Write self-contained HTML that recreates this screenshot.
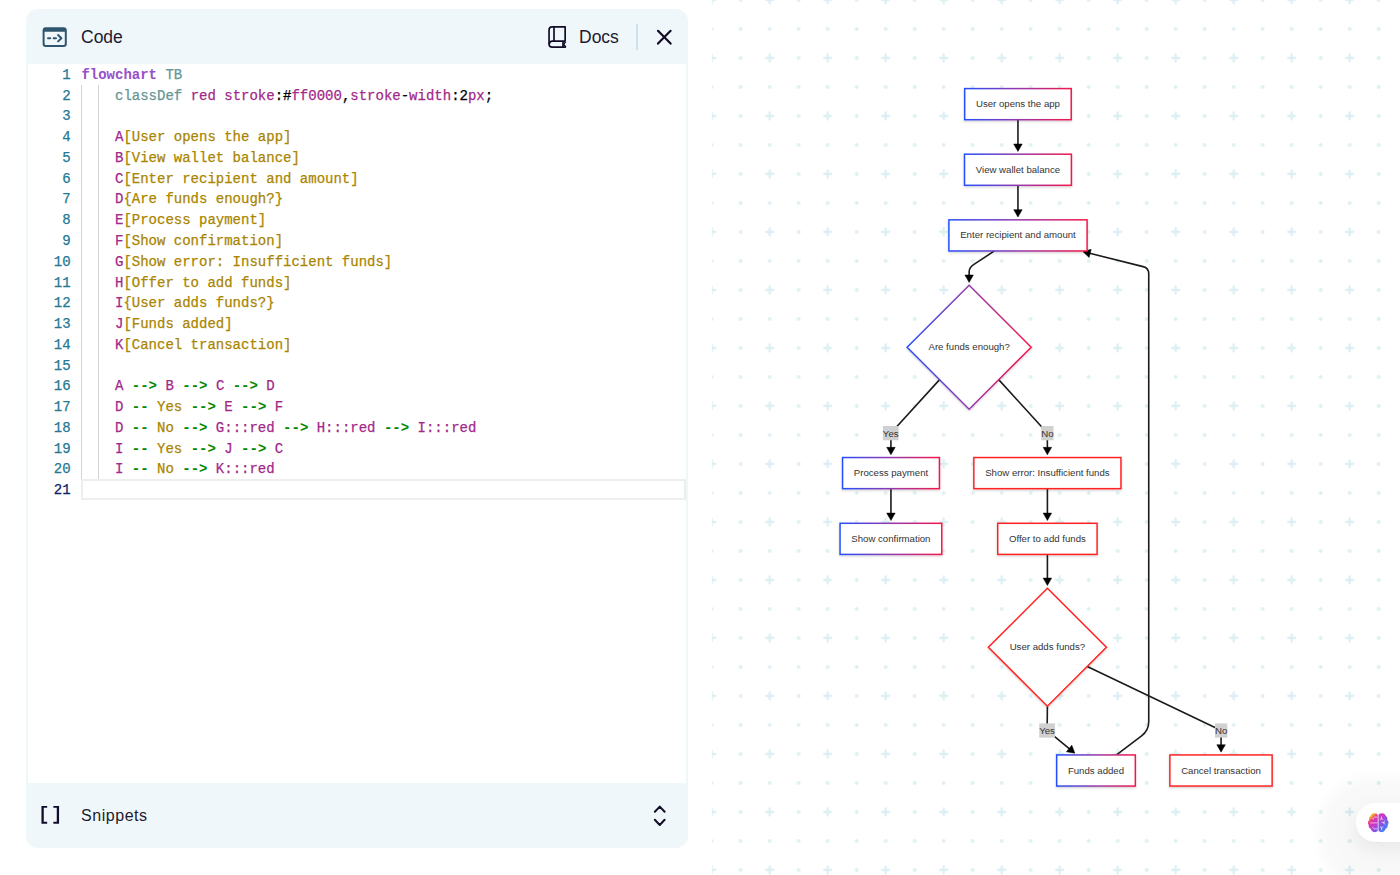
<!DOCTYPE html>
<html>
<head>
<meta charset="utf-8">
<title>Mermaid Playground</title>
<style>
html,body{margin:0;padding:0;}
body{width:1400px;height:875px;overflow:hidden;background:#fff;position:relative;font-family:"Liberation Sans",sans-serif;color:#1e1a2e;}
#canvas{position:absolute;left:712px;top:0;width:688px;height:875px;overflow:hidden;}
#canvas svg{position:absolute;left:0;top:0;}
#panel{position:absolute;left:26px;top:8.6px;width:662px;height:839.4px;background:#eff7fa;border-radius:12px;overflow:hidden;}
#hdr{position:absolute;left:0;top:0;width:662px;height:54px;}
#hdr .ttl{position:absolute;left:55px;top:17.6px;font-size:17.5px;line-height:22px;color:#1e1a2e;}
#hdr .docs{position:absolute;left:553px;top:17.6px;font-size:17.5px;line-height:22px;color:#1e1a2e;}
#hdr .sep{position:absolute;left:610.3px;top:15.4px;width:1.8px;height:26.2px;background:#cbe0f0;}
#ed{position:absolute;left:2px;top:55.2px;width:658px;height:719.5px;background:#fff;overflow:hidden;font-family:"Liberation Mono",monospace;font-size:14px;-webkit-text-stroke:0.25px currentColor;}
.ln{position:absolute;left:0;width:658px;height:20.77px;line-height:20.77px;white-space:pre;}
.ln .n{position:absolute;left:0;top:2px;width:42.6px;text-align:right;color:#237893;}
.ln .c{position:absolute;left:53.4px;top:2px;color:#000;}
.ln.act .n{color:#0b216f;}
.g{position:absolute;width:1px;background:#d3d3d3;}
.tk{color:#9650c8;font-weight:bold;-webkit-text-stroke:0;}
.kw{color:#649696;}
.v{color:#a22889;}
.s{color:#aa8500;}
.t{color:#008800;font-weight:bold;-webkit-text-stroke:0;}
#cur{position:absolute;left:53.4px;top:415.4px;width:600.6px;height:16.8px;border:2px solid #eeeeee;}
#ftr{position:absolute;left:0;top:774.7px;width:662px;height:64.7px;}
#ftr .ttl{position:absolute;left:55px;top:796px;}
#snip{position:absolute;left:55px;top:21.7px;font-size:16px;line-height:22px;letter-spacing:0.55px;color:#1e1a2e;}
#pill{position:absolute;left:1356px;top:802.5px;width:80px;height:39.5px;border-radius:20px;background:#fff;box-shadow:0 10.5px 14px 37px rgba(0,0,0,0.028),0 8px 16px 2px rgba(0,0,0,0.055);}
</style>
</head>
<body>
<div id="canvas">
<svg width="688" height="875" viewBox="712 0 688 875">
<defs>
<pattern id="grid" x="682.65" y="-29.05" width="58" height="58" patternUnits="userSpaceOnUse">
<g stroke="#dceff3" stroke-width="2.3" stroke-linecap="round" fill="none">
<path d="M25.5 29H32.5M29 25.5V32.5"/>
</g>
<g fill="#dff0f4">
<circle cx="0" cy="0" r="1.95"/><circle cx="58" cy="0" r="1.95"/><circle cx="0" cy="58" r="1.95"/><circle cx="58" cy="58" r="1.95"/>
<circle cx="29" cy="0" r="1.95"/><circle cx="29" cy="58" r="1.95"/>
<circle cx="0" cy="29" r="1.95"/><circle cx="58" cy="29" r="1.95"/>
</g>
</pattern>
</defs>
<rect x="712" y="0" width="688" height="875" fill="url(#grid)"/>
<defs>
<linearGradient id="ng" x1="0" y1="0" x2="1" y2="0"><stop offset="0" stop-color="#2650fb"/><stop offset="0.5" stop-color="#9438ad"/><stop offset="1" stop-color="#f7174a"/></linearGradient>
<filter id="ds" x="-10%" y="-20%" width="120%" height="150%"><feDropShadow dx="0" dy="1.2" stdDeviation="1.3" flood-color="#000" flood-opacity="0.19"/></filter>
</defs>
<path d="M1017.95 119.7 L1017.95 144.5" fill="none" stroke="#1b1b1b" stroke-width="1.6"/>
<path d="M1017.95 151.4L1013.7 144L1022.2 144Z" fill="#000" stroke="#000" stroke-width="0.5" stroke-linejoin="round"/>
<path d="M1017.95 185.3 L1017.95 210.15" fill="none" stroke="#1b1b1b" stroke-width="1.6"/>
<path d="M1017.95 217.05L1013.7 209.65L1022.2 209.65Z" fill="#000" stroke="#000" stroke-width="0.5" stroke-linejoin="round"/>
<path d="M994.41 250.95 L974.33 264.19 Q969.15 267.6 969.15 271.55 L969.15 275.5" fill="none" stroke="#1b1b1b" stroke-width="1.6"/>
<path d="M969.15 282.4L964.9 275L973.4 275Z" fill="#000" stroke="#000" stroke-width="0.5" stroke-linejoin="round"/>
<path d="M939.6 379.65 L895.07 428.57 Q890.9 433.15 890.91 439.35 L890.93 447.85" fill="none" stroke="#1b1b1b" stroke-width="1.6"/>
<path d="M890.94 454.75L886.68 447.36L895.18 447.34Z" fill="#000" stroke="#000" stroke-width="0.5" stroke-linejoin="round"/>
<path d="M998.69 379.66 L1043.18 428.56 Q1047.35 433.15 1047.36 439.35 L1047.38 447.85" fill="none" stroke="#1b1b1b" stroke-width="1.6"/>
<path d="M1047.39 454.75L1043.13 447.36L1051.63 447.34Z" fill="#000" stroke="#000" stroke-width="0.5" stroke-linejoin="round"/>
<path d="M890.95 488.65 L890.95 513.6" fill="none" stroke="#1b1b1b" stroke-width="1.6"/>
<path d="M890.95 520.5L886.7 513.1L895.2 513.1Z" fill="#000" stroke="#000" stroke-width="0.5" stroke-linejoin="round"/>
<path d="M1047.4 488.65 L1047.4 513.6" fill="none" stroke="#1b1b1b" stroke-width="1.6"/>
<path d="M1047.4 520.5L1043.15 513.1L1051.65 513.1Z" fill="#000" stroke="#000" stroke-width="0.5" stroke-linejoin="round"/>
<path d="M1047.4 554.4 L1047.4 578.6" fill="none" stroke="#1b1b1b" stroke-width="1.6"/>
<path d="M1047.4 585.5L1043.15 578.1L1051.65 578.1Z" fill="#000" stroke="#000" stroke-width="0.5" stroke-linejoin="round"/>
<path d="M1047.4 706.3 L1047.21 724.3 Q1047.15 730.5 1051.95 734.43 L1069.5 748.8" fill="none" stroke="#1b1b1b" stroke-width="1.6"/>
<path d="M1074.84 753.18L1066.43 751.78L1071.81 745.2Z" fill="#000" stroke="#000" stroke-width="0.5" stroke-linejoin="round"/>
<path d="M1087.29 666.41 L1215.51 727.82 Q1221.1 730.5 1221.09 736.7 L1221.07 745.25" fill="none" stroke="#1b1b1b" stroke-width="1.6"/>
<path d="M1221.06 752.15L1216.82 744.74L1225.32 744.76Z" fill="#000" stroke="#000" stroke-width="0.5" stroke-linejoin="round"/>
<path d="M1116.5 754.95 L1141.57 735.94 Q1148.74 730.5 1148.74 721.5 L1148.74 273.85 Q1148.74 268.05 1143.11 266.64 L1089.68 253.3" fill="none" stroke="#1b1b1b" stroke-width="1.6"/>
<path d="M1082.98 251.63L1091.19 249.3L1089.13 257.54Z" fill="#000" stroke="#000" stroke-width="0.5" stroke-linejoin="round"/>
<rect x="964.69" y="88.6" width="106.53" height="31.1" fill="#fff" stroke="url(#ng)" stroke-width="1.5" filter="url(#ds)"/>
<text x="1017.95" y="107.15" text-anchor="middle" font-family="Liberation Sans, sans-serif" font-size="9.65" fill="#333">User opens the app</text>
<rect x="964.51" y="154.2" width="106.88" height="31.1" fill="#fff" stroke="url(#ng)" stroke-width="1.5" filter="url(#ds)"/>
<text x="1017.95" y="172.75" text-anchor="middle" font-family="Liberation Sans, sans-serif" font-size="9.65" fill="#333">View wallet balance</text>
<rect x="948.91" y="219.85" width="138.17" height="31.1" fill="#fff" stroke="url(#ng)" stroke-width="1.5" filter="url(#ds)"/>
<text x="1018" y="238.4" text-anchor="middle" font-family="Liberation Sans, sans-serif" font-size="9.65" fill="#333">Enter recipient and amount</text>
<polygon points="969.15,285.2 1031.15,347.2 969.15,409.2 907.15,347.2" fill="#fff" stroke="url(#ng)" stroke-width="1.5" filter="url(#ds)"/>
<text x="969.15" y="350.2" text-anchor="middle" font-family="Liberation Sans, sans-serif" font-size="9.65" fill="#333">Are funds enough?</text>
<rect x="842.57" y="457.55" width="96.85" height="31.1" fill="#fff" stroke="url(#ng)" stroke-width="1.5" filter="url(#ds)"/>
<text x="891" y="476.1" text-anchor="middle" font-family="Liberation Sans, sans-serif" font-size="9.65" fill="#333">Process payment</text>
<rect x="840.06" y="523.3" width="101.68" height="31.1" fill="#fff" stroke="url(#ng)" stroke-width="1.5" filter="url(#ds)"/>
<text x="890.9" y="541.85" text-anchor="middle" font-family="Liberation Sans, sans-serif" font-size="9.65" fill="#333">Show confirmation</text>
<rect x="973.85" y="457.55" width="147.1" height="31.1" fill="#fff" stroke="#ff2424" stroke-width="1.5" filter="url(#ds)"/>
<text x="1047.4" y="476.1" text-anchor="middle" font-family="Liberation Sans, sans-serif" font-size="9.65" fill="#333">Show error: Insufficient funds</text>
<rect x="997.71" y="523.3" width="99.37" height="31.1" fill="#fff" stroke="#ff2424" stroke-width="1.5" filter="url(#ds)"/>
<text x="1047.4" y="541.85" text-anchor="middle" font-family="Liberation Sans, sans-serif" font-size="9.65" fill="#333">Offer to add funds</text>
<polygon points="1047.4,588.3 1106.4,647.3 1047.4,706.3 988.4,647.3" fill="#fff" stroke="#ff2424" stroke-width="1.5" filter="url(#ds)"/>
<text x="1047.4" y="650.3" text-anchor="middle" font-family="Liberation Sans, sans-serif" font-size="9.65" fill="#333">User adds funds?</text>
<rect x="1056.68" y="754.95" width="78.64" height="31.1" fill="#fff" stroke="url(#ng)" stroke-width="1.5" filter="url(#ds)"/>
<text x="1096" y="773.5" text-anchor="middle" font-family="Liberation Sans, sans-serif" font-size="9.65" fill="#333">Funds added</text>
<rect x="1169.89" y="754.95" width="102.22" height="31.1" fill="#fff" stroke="#ff2424" stroke-width="1.5" filter="url(#ds)"/>
<text x="1221" y="773.5" text-anchor="middle" font-family="Liberation Sans, sans-serif" font-size="9.65" fill="#333">Cancel transaction</text>
<rect x="882.83" y="426.02" width="15.74" height="14.25" fill="#d0d0d0"/>
<text x="890.7" y="436.72" text-anchor="middle" font-family="Liberation Sans, sans-serif" font-size="9.65" fill="#333">Yes</text>
<rect x="1041.18" y="426.02" width="12.34" height="14.25" fill="#d0d0d0"/>
<text x="1047.35" y="436.72" text-anchor="middle" font-family="Liberation Sans, sans-serif" font-size="9.65" fill="#333">No</text>
<rect x="1039.23" y="723.38" width="15.74" height="14.25" fill="#d0d0d0"/>
<text x="1047.1" y="734.08" text-anchor="middle" font-family="Liberation Sans, sans-serif" font-size="9.65" fill="#333">Yes</text>
<rect x="1214.98" y="723.38" width="12.34" height="14.25" fill="#d0d0d0"/>
<text x="1221.15" y="734.08" text-anchor="middle" font-family="Liberation Sans, sans-serif" font-size="9.65" fill="#333">No</text>
</svg>
</div>
<div id="pill"><svg style="position:absolute;left:0;top:0" width="44" height="40" viewBox="1356 802.5 44 40">
<defs><linearGradient id="bg" gradientUnits="userSpaceOnUse" x1="1369" y1="813" x2="1388" y2="832">
<stop offset="0" stop-color="#ecb42a"/><stop offset="0.15" stop-color="#ecb42a"/><stop offset="0.2" stop-color="#f0586e"/><stop offset="0.29" stop-color="#e030b2"/><stop offset="0.46" stop-color="#bc40cc"/><stop offset="0.57" stop-color="#9650de"/><stop offset="0.7" stop-color="#6a62f0"/><stop offset="0.82" stop-color="#4c7cf0"/><stop offset="0.9" stop-color="#44aad6"/><stop offset="1" stop-color="#4a8cec"/></linearGradient></defs>
<rect x="1377.2" y="814" width="2" height="17" fill="#dcc6f2"/>
<g fill="url(#bg)">
<path d="M1377.7 815.2C1377.7 813.6 1376 812.7 1374.6 812.9C1372.6 812.6 1371 813.9 1370.6 815.6C1369 816.4 1368.6 818.2 1369.2 819.5C1367.6 820.6 1367.4 823 1368.7 824.4C1368.4 826.2 1369.4 827.8 1370.9 828.4C1371.3 830.4 1373.2 831.9 1375.1 831.6C1376.4 831.6 1377.7 830.6 1377.7 829.4Z"/>
<path d="M1378.7 815.2C1378.7 813.6 1380.4 812.7 1381.8 812.9C1383.8 812.6 1385.4 813.9 1385.8 815.6C1387.4 816.4 1387.8 818.2 1387.2 819.5C1388.8 820.6 1389 823 1387.7 824.4C1388 826.2 1387 827.8 1385.5 828.4C1385.1 830.4 1383.2 831.9 1381.3 831.6C1380 831.6 1378.7 830.6 1378.7 829.4Z"/>
</g>
<g fill="none" stroke="#fff" stroke-opacity="0.75" stroke-width="0.8" stroke-linecap="round">
<path d="M1374.4 816.6H1377.2M1370.6 822.4H1377.2M1372.6 826.8L1374.2 828.4H1377.2"/>
<path d="M1381.4 816.2V818.2M1381.4 818.2L1380 819M1381.4 818.2L1382.8 819M1384.4 820.6L1383.8 822.4M1383.8 822.4L1382 821.8M1383.8 822.4L1385 823.8M1381.6 829.4V827.4M1381.6 827.4L1380.2 826.4M1381.6 827.4L1383 826.4"/>
</g>
<rect x="1372.3" y="817.3" width="1.4" height="1.4" fill="#fff" fill-opacity="0.7"/>
</svg>
</div>
<div id="panel">
<div id="hdr">
<svg style="position:absolute;left:0;top:0.4px" width="662" height="54" viewBox="26 9 662 54">
<g fill="none" stroke="#2e566e" stroke-width="2" stroke-linecap="round" stroke-linejoin="round">
<rect x="43.6" y="28.2" width="22.2" height="17.8" rx="2.2"/>
<path d="M43.6 30.4H65.8" stroke-width="2.6" stroke-linecap="butt"/>
<path d="M48 38.2H50.2M53.6 38.2H56M58.1 35L61.4 38.2L58.1 41.4"/>
</g>
<g fill="none" stroke="#120c28" stroke-width="1.7" stroke-linejoin="round" stroke-linecap="butt">
<path d="M565.15 41.2V26.85H552.2A3.15 3.15 0 0 0 549.05 30V44A3.15 3.15 0 0 0 552.2 47.15H565.9"/>
<path d="M565.15 41.2H552.2A2.97 2.97 0 0 0 549.25 44.2"/>
<path d="M554 26.85V41.2"/>
<path d="M563 41.2V47.15"/>
<path d="M565.9 41.6L563.6 44.2L565.9 47.15" stroke-width="1.4"/>
</g>
<path d="M658 30.8L670.6 43.6M670.6 30.8L658 43.6" fill="none" stroke="#120c28" stroke-width="2.2" stroke-linecap="round"/>
</svg>

<div class="ttl">Code</div>
<div class="docs">Docs</div>
<div class="sep"></div>
</div>
<div id="ed">
<div class="ln" style="top:-0.95px"><span class="n">1</span><span class="c"><span class="tk">flowchart</span> <span class="kw">TB</span></span></div>
<div class="ln" style="top:19.82px"><span class="n">2</span><span class="c">    <span class="kw">classDef</span> <span class="v">red stroke</span>:#<span class="v">ff0000</span>,<span class="v">stroke</span>-<span class="v">width</span>:2<span class="v">px</span>;</span></div>
<div class="ln" style="top:40.59px"><span class="n">3</span><span class="c"></span></div>
<div class="ln" style="top:61.36px"><span class="n">4</span><span class="c">    <span class="v">A</span><span class="s">[User opens the app]</span></span></div>
<div class="ln" style="top:82.13px"><span class="n">5</span><span class="c">    <span class="v">B</span><span class="s">[View wallet balance]</span></span></div>
<div class="ln" style="top:102.90px"><span class="n">6</span><span class="c">    <span class="v">C</span><span class="s">[Enter recipient and amount]</span></span></div>
<div class="ln" style="top:123.67px"><span class="n">7</span><span class="c">    <span class="v">D</span><span class="s">{Are funds enough?}</span></span></div>
<div class="ln" style="top:144.44px"><span class="n">8</span><span class="c">    <span class="v">E</span><span class="s">[Process payment]</span></span></div>
<div class="ln" style="top:165.21px"><span class="n">9</span><span class="c">    <span class="v">F</span><span class="s">[Show confirmation]</span></span></div>
<div class="ln" style="top:185.98px"><span class="n">10</span><span class="c">    <span class="v">G</span><span class="s">[Show error: Insufficient funds]</span></span></div>
<div class="ln" style="top:206.75px"><span class="n">11</span><span class="c">    <span class="v">H</span><span class="s">[Offer to add funds]</span></span></div>
<div class="ln" style="top:227.52px"><span class="n">12</span><span class="c">    <span class="v">I</span><span class="s">{User adds funds?}</span></span></div>
<div class="ln" style="top:248.29px"><span class="n">13</span><span class="c">    <span class="v">J</span><span class="s">[Funds added]</span></span></div>
<div class="ln" style="top:269.06px"><span class="n">14</span><span class="c">    <span class="v">K</span><span class="s">[Cancel transaction]</span></span></div>
<div class="ln" style="top:289.83px"><span class="n">15</span><span class="c"></span></div>
<div class="ln" style="top:310.60px"><span class="n">16</span><span class="c">    <span class="v">A</span> <span class="t">--&gt;</span> <span class="v">B</span> <span class="t">--&gt;</span> <span class="v">C</span> <span class="t">--&gt;</span> <span class="v">D</span></span></div>
<div class="ln" style="top:331.37px"><span class="n">17</span><span class="c">    <span class="v">D</span> <span class="t">--</span><span class="s"> Yes </span><span class="t">--&gt;</span> <span class="v">E</span> <span class="t">--&gt;</span> <span class="v">F</span></span></div>
<div class="ln" style="top:352.14px"><span class="n">18</span><span class="c">    <span class="v">D</span> <span class="t">--</span><span class="s"> No </span><span class="t">--&gt;</span> <span class="v">G:::red</span> <span class="t">--&gt;</span> <span class="v">H:::red</span> <span class="t">--&gt;</span> <span class="v">I:::red</span></span></div>
<div class="ln" style="top:372.91px"><span class="n">19</span><span class="c">    <span class="v">I</span> <span class="t">--</span><span class="s"> Yes </span><span class="t">--&gt;</span> <span class="v">J</span> <span class="t">--&gt;</span> <span class="v">C</span></span></div>
<div class="ln" style="top:393.68px"><span class="n">20</span><span class="c">    <span class="v">I</span> <span class="t">--</span><span class="s"> No </span><span class="t">--&gt;</span> <span class="v">K:::red</span></span></div>
<div class="ln act" style="top:414.45px"><span class="n">21</span><span class="c"></span></div>
<div class="g" style="left:53.4px;top:20.82px;height:394.63px"></div>
<div class="g" style="left:70.3px;top:20.82px;height:394.63px"></div>
<div id="cur"></div>
</div>
<div id="ftr">
<svg style="position:absolute;left:0;top:0" width="662" height="64.7" viewBox="26 783.3 662 64.7">
<g fill="#120c28">
<path d="M41.4 806.2H47.1V808.1H43.7V822.1H47.1V824H41.4Z"/>
<path d="M59 806.2H53.3V808.1H56.7V822.1H53.3V824H59Z"/>
</g>
<g fill="none" stroke="#120c28" stroke-width="2" stroke-linecap="round" stroke-linejoin="round">
<path d="M654.9 812.1L659.8 806.9L664.7 812.1"/>
<path d="M654.9 820.1L659.8 825.3L664.7 820.1"/>
</g>
</svg>

<div id="snip">Snippets</div>
</div>
</div>
</body>
</html>
